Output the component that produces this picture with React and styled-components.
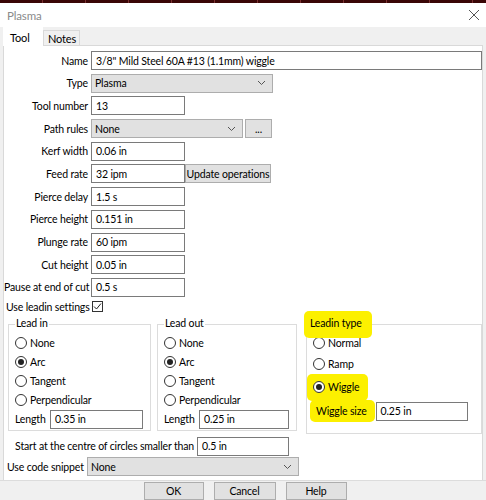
import React from 'react';
import styled, { createGlobalStyle } from 'styled-components';

const Global = createGlobalStyle`
  body {
    margin: 0;
    background: #ffffff;
    font-family: Lato, "Noto Sans", sans-serif;
    font-size: 10.5px;
    letter-spacing: -0.15px;
    color: #000;
  }
`;

const Window = styled.div`
  width: 486px;
  height: 500px;
  display: flex;
  flex-direction: column;
  overflow: hidden;
  background: #f0f0f0;
  & > * { flex-shrink: 0; }
`;

const TopStrip = styled.div`
  height: 3px;
  background: repeating-linear-gradient(90deg, #3a0606 0 42px, #7a3030 42px 43px);
`;

const TitleBar = styled.div`
  height: 24px;
  background: #fff;
  display: flex;
  align-items: center;
  justify-content: space-between;
  padding: 0 6px 0 7px;
  color: #8a8a8a;
  font-size: 11.5px;
`;

const TabBar = styled.div`
  height: 18px;
  display: flex;
  align-items: flex-end;
  padding-left: 3px;
  background: #f0f0f0;
`;

const Tab = styled.div`
  height: ${p => (p.active ? '19px' : '15px')};
  width: ${p => (p.active ? '40px' : '37px')};
  padding-left: ${p => (p.active ? '6px' : '4px')};
  display: flex;
  align-items: center;
  font-size: 11px;
  background: ${p => (p.active ? '#fff' : '#f0f0f0')};
  border: 1px solid #d9d9d9;
  border-bottom: none;
  ${p => (p.active ? 'margin-bottom:-1px; position:relative; z-index:1; border-color:#fff;' : '')}
  box-sizing: border-box;
`;

const Panel = styled.div`
  flex: 1;
  flex-shrink: 1 !important;
  margin: 0 3px;
  background: #fff;
  border: 1px solid #d9d9d9;
  border-bottom: none;
  padding: 5px 0 0 0;
  display: flex;
  flex-direction: column;
  & > * { flex-shrink: 0; }
`;

const Row = styled.div`
  display: flex;
  align-items: center;
  height: ${p => p.h ?? 19}px;
  margin-bottom: ${p => p.mb ?? 3.7}px;
  white-space: nowrap;
`;

const Label = styled.div`
  width: ${p => p.w ?? 84}px;
  text-align: ${p => (p.left ? 'left' : 'right')};
  padding-right: 3px;
  padding-left: ${p => p.pl ?? 0}px;
  white-space: nowrap;
  flex-shrink: 0;
`;

const Input = styled.div`
  width: ${p => p.w}px;
  height: 19px;
  box-sizing: border-box;
  border: 1px solid #7a7a7a;
  background: #fff;
  padding-left: 4px;
  display: flex;
  align-items: center;
  white-space: nowrap;
  overflow: hidden;
  flex-shrink: 0;
`;

const Select = styled.div`
  width: ${p => p.w}px;
  height: 19px;
  box-sizing: border-box;
  border: 1px solid #adadad;
  background: #e1e1e1;
  padding: 0 6px 0 3px;
  display: flex;
  align-items: center;
  justify-content: space-between;
  flex-shrink: 0;
`;

const Button = styled.div`
  width: ${p => p.w}px;
  height: ${p => p.h ?? 19}px;
  box-sizing: border-box;
  border: 1px solid #adadad;
  background: #e1e1e1;
  display: flex;
  align-items: center;
  justify-content: center;
  margin-left: ${p => p.ml ?? 0}px;
  white-space: nowrap;
  flex-shrink: 0;
`;

const Check = styled.div`
  width: 11px;
  height: 11px;
  box-sizing: border-box;
  border: 1px solid #333;
  display: flex;
  align-items: center;
  justify-content: center;
`;

const Groups = styled.div`
  display: flex;
  align-items: flex-start;
  padding-left: 4px;
  margin-top: 11px;
`;

const Group = styled.div`
  position: relative;
  width: ${p => p.w}px;
  height: ${p => p.h ?? 107}px;
  box-sizing: border-box;
  border: 1px solid #dcdcdc;
  margin-right: ${p => p.mr ?? 0}px;
  padding: 9px 0 0 6px;
  display: flex;
  flex-direction: column;
`;

const Legend = styled.div`
  position: absolute;
  top: -8px;
  left: 6px;
  padding: 0 1px;
  background: ${p => (p.hl ? 'transparent' : '#fff')};
`;

const RadioRow = styled.div`
  display: flex;
  align-items: center;
  height: 19px;
  gap: 3px;
`;

const Circle = styled.div`
  width: 12px;
  height: 12px;
  box-sizing: border-box;
  border: 1px solid #333;
  border-radius: 50%;
  display: flex;
  align-items: center;
  justify-content: center;
  background: #fff;
  &::after {
    content: '';
    width: 6px;
    height: 6px;
    border-radius: 50%;
    background: ${p => (p.on ? '#222' : 'transparent')};
  }
`;

const Highlight = styled.div`
  background: #fcf000;
  border-radius: 5px;
  display: inline-flex;
  align-items: center;
  white-space: nowrap;
  padding: ${p => p.pad ?? '2px 4px'};
  margin: ${p => p.m ?? '0'};
`;

const Footer = styled.div`
  height: 18px;
  display: flex;
  justify-content: center;
  gap: 10px;
  padding-left: 4px;
  border-top: 1px solid #dcdcdc;
  padding-top: 1px;
`;

const Chevron = () => (
  <svg width="9" height="6" viewBox="0 0 9 6">
    <path d="M1 1 L4.5 4.5 L8 1" stroke="#555" fill="none" strokeWidth="1" />
  </svg>
);

const Radio = ({ on, children }) => (
  <RadioRow>
    <Circle on={on} />
    <span>{children}</span>
  </RadioRow>
);

const fields = [
  ['Kerf width', '0.06 in'],
  ['Feed rate', '32 ipm', true],
  ['Pierce delay', '1.5 s'],
  ['Pierce height', '0.151 in'],
  ['Plunge rate', '60 ipm'],
  ['Cut height', '0.05 in'],
  ['Pause at end of cut', '0.5 s'],
];

export default function App() {
  return (
    <Window>
      <Global />
      <TopStrip />
      <TitleBar>
        <span>Plasma</span>
        <svg width="12" height="12" viewBox="0 0 12 12">
          <path d="M1 1 L11 11 M11 1 L1 11" stroke="#555" strokeWidth="1" />
        </svg>
      </TitleBar>
      <TabBar>
        <Tab active>Tool</Tab>
        <Tab>Notes</Tab>
      </TabBar>
      <Panel>
        <Row>
          <Label>Name</Label>
          <Input w={391}>3/8" Mild Steel 60A #13 (1.1mm) wiggle</Input>
        </Row>
        <Row>
          <Label>Type</Label>
          <Select w={182}><span>Plasma</span><Chevron /></Select>
        </Row>
        <Row>
          <Label>Tool number</Label>
          <Input w={94}>13</Input>
        </Row>
        <Row>
          <Label>Path rules</Label>
          <Select w={152}><span>None</span><Chevron /></Select>
          <Button w={27} ml={2}>...</Button>
        </Row>
        {fields.map(([l, v, upd]) => (
          <Row key={l}>
            <Label>{l}</Label>
            <Input w={94}>{v}</Input>
            {upd && <Button w={86}>Update operations</Button>}
          </Row>
        ))}
        <Row mb={0} h={12}>
          <Label w={83} left pl={2}>Use leadin settings</Label>
          <Check>
            <svg width="9" height="9" viewBox="0 0 9 9">
              <path d="M1 4.5 L3.5 7 L8 1.5" stroke="#222" fill="none" strokeWidth="1" />
            </svg>
          </Check>
        </Row>
        <Groups>
          <Group w={143} mr={6}>
            <Legend>Lead in</Legend>
            <Radio>None</Radio>
            <Radio on>Arc</Radio>
            <Radio>Tangent</Radio>
            <Radio>Perpendicular</Radio>
            <Row mb={0}>
              <Label w={32} left>Length</Label>
              <Input w={93}>0.35 in</Input>
            </Row>
          </Group>
          <Group w={140} mr={9}>
            <Legend>Lead out</Legend>
            <Radio>None</Radio>
            <Radio on>Arc</Radio>
            <Radio>Tangent</Radio>
            <Radio>Perpendicular</Radio>
            <Row mb={0}>
              <Label w={32} left>Length</Label>
              <Input w={90}>0.25 in</Input>
            </Row>
          </Group>
          <Group w={176} h={110}>
            <Legend hl>
              <Highlight pad="6px 10px 9px 6px" m="-7px 0 0 -10px">Leadin type</Highlight>
            </Legend>
            <Radio>Normal</Radio>
            <RadioRow style={{ marginTop: 2 }}>
              <Circle />
              <span>Ramp</span>
            </RadioRow>
            <Highlight pad="4px 9px 4px 6px" m="0 0 0 -6px" style={{ alignSelf: 'flex-start' }}>
              <RadioRow>
                <Circle on />
                <span>Wiggle</span>
              </RadioRow>
            </Highlight>
            <Row mb={0} style={{ marginTop: 1 }}>
              <Highlight pad="5px 8px 5px 6px" m="0 1px 0 -3px">Wiggle size</Highlight>
              <Input w={92}>0.25 in</Input>
            </Row>
          </Group>
        </Groups>
        <Row style={{ marginTop: 3 }} mb={1.5}>
          <Label w={180} pl={10}>Start at the centre of circles smaller than</Label>
          <Input w={92}>0.5 in</Input>
        </Row>
        <Row mb={0}>
          <Label w={77} left pl={3}>Use code snippet</Label>
          <Select w={212}><span>None</span><Chevron /></Select>
        </Row>
      </Panel>
      <Footer>
        <Button w={60} h={18}>OK</Button>
        <Button w={62} h={18}>Cancel</Button>
        <Button w={61} h={18}>Help</Button>
      </Footer>
    </Window>
  );
}
